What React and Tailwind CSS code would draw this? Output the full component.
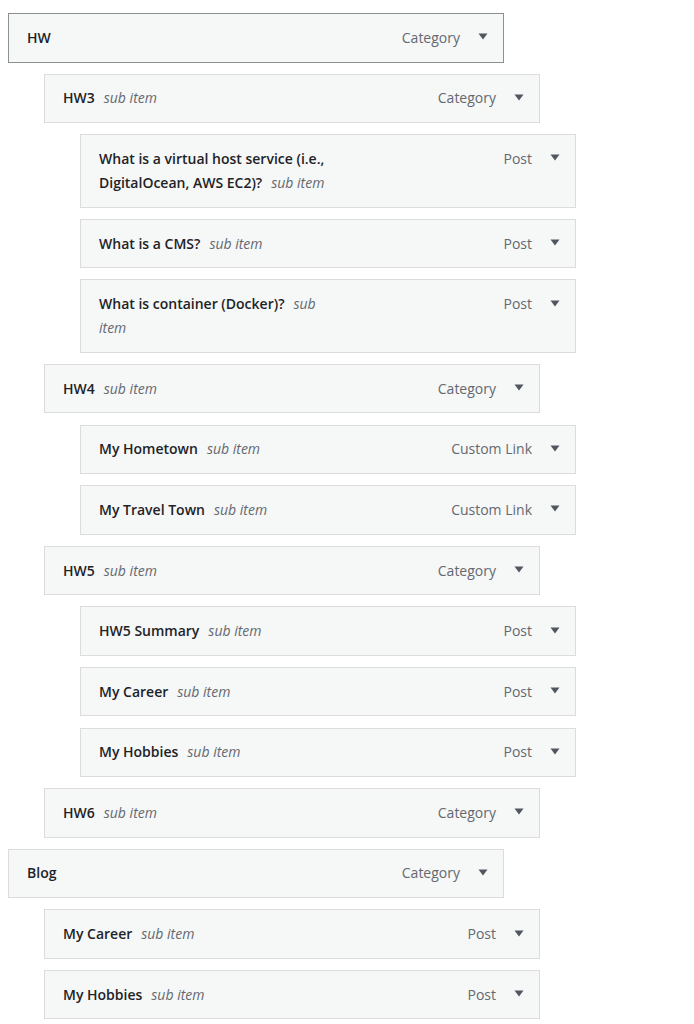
import React from 'react';

const items = [
    { level: 0, title: 'HW', type: 'Category', sub: false, active: true },
    { level: 1, title: 'HW3', type: 'Category', sub: true },
    { level: 2, title: 'What is a virtual host service (i.e., DigitalOcean, AWS EC2)?', type: 'Post', sub: true },
    { level: 2, title: 'What is a CMS?', type: 'Post', sub: true },
    { level: 2, title: 'What is container (Docker)?', type: 'Post', sub: true },
    { level: 1, title: 'HW4', type: 'Category', sub: true },
    { level: 2, title: 'My Hometown', type: 'Custom Link', sub: true },
    { level: 2, title: 'My Travel Town', type: 'Custom Link', sub: true },
    { level: 1, title: 'HW5', type: 'Category', sub: true },
    { level: 2, title: 'HW5 Summary', type: 'Post', sub: true },
    { level: 2, title: 'My Career', type: 'Post', sub: true },
    { level: 2, title: 'My Hobbies', type: 'Post', sub: true },
    { level: 1, title: 'HW6', type: 'Category', sub: true },
    { level: 0, title: 'Blog', type: 'Category', sub: false },
    { level: 1, title: 'My Career', type: 'Post', sub: true },
    { level: 1, title: 'My Hobbies', type: 'Post', sub: true },
];

const indent = ['ml-0', 'ml-[36px]', 'ml-[72px]'];

const MenuItem = ({ item }) => (
    <div
        className={`${indent[item.level]} w-[496px] flex items-start justify-between bg-[#f6f7f7] border pl-[18px] pr-[13px] py-[11.75px] leading-[24px] ${item.active ? 'border-[#8c8f94]' : 'border-[#dcdcde]'}`}
    >
        <div className="w-[238px] text-[14px] text-[#1d2327]">
            <span className="font-semibold">{item.title}</span>
            {item.sub && <span className="italic text-[#646970] ml-[9px]">sub item</span>}
        </div>
        <div className="flex items-start">
            <span className="text-[14px] text-[#646970]">{item.type}</span>
            {/* toggle arrow */}
            <span className="w-[14px] h-[24px] ml-[16px] flex items-center justify-center">
                <svg width="10" height="7" viewBox="0 0 10 7" className="-mt-[2px]">
                    <polygon points="0.5,0.5 9.5,0.5 5,6.5" fill="#50575e" />
                </svg>
            </span>
        </div>
    </div>
);

export default function App() {
    return (
        <div className="min-h-[1024px] bg-white pl-[8px] pt-[13px] font-['Open_Sans',sans-serif]">
            <div className="flex flex-col gap-[11.1px]">
                {items.map((item, i) => (
                    <MenuItem key={i} item={item} />
                ))}
            </div>
        </div>
    );
}
